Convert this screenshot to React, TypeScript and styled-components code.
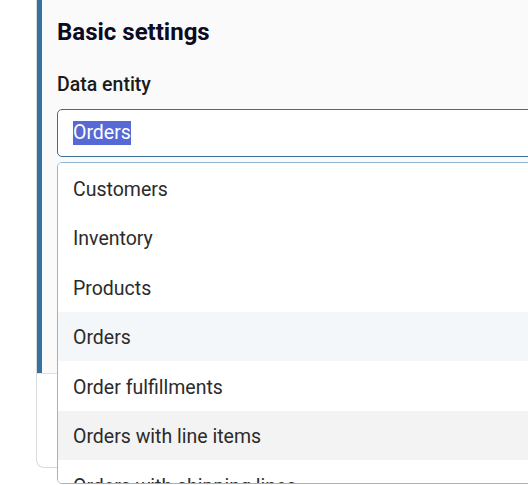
import styled, { createGlobalStyle } from 'styled-components';

const GlobalStyle = createGlobalStyle`
  html, body {
    margin: 0;
    padding: 0;
    background: #ffffff;
    overflow: hidden;
  }
  body {
    font-family: Roboto, "Liberation Sans", sans-serif;
  }
`;

const Page = styled.div`
  width: 528px;
  height: 485px;
  padding-left: 36px;
  box-sizing: border-box;
  position: relative;
`;

const Card = styled.div`
  width: 700px;
  border: 1px solid #d6dbe0;
  border-top: none;
  border-radius: 0 0 0 8px;
  background: #fff;
`;

const Section = styled.section`
  height: 373px;
  box-sizing: border-box;
  border-left: 5px solid #36729b;
  background: #fafafa;
  padding: 17px 0 0 15px;
  position: relative;
`;

const Heading = styled.h2`
  margin: 0;
  font-size: 24px;
  line-height: 30px;
  font-weight: 700;
  color: #0b0b24;
`;

const Label = styled.div`
  margin-top: 26px;
  font-size: 19.5px;
  line-height: 24px;
  font-weight: 500;
  color: #1b1b1b;
`;

const Input = styled.div`
  margin-top: 12px;
  height: 48px;
  box-sizing: border-box;
  border: 1px solid #3b6f95;
  border-radius: 5px;
  background: #fff;
  padding: 0 15px;
  display: flex;
  align-items: center;
  font-size: 19.5px;
  color: #333;
`;

const Selected = styled.span`
  background: #5769d4;
  color: #fff;
  line-height: 24px;
`;

const Footer = styled.div`
  height: 93px;
  border-top: 1px solid #dde2e6;
`;

const Menu = styled.ul`
  position: absolute;
  left: 15px;
  top: 162px;
  width: 640px;
  height: 322px;
  box-sizing: border-box;
  margin: 0;
  padding: 0;
  list-style: none;
  background: #fff;
  border: 1px solid #93b7d1;
  border-radius: 5px;
  overflow: hidden;
  z-index: 2;
`;

const Option = styled.li<{ $tone?: 'active' | 'hover' }>`
  height: 49.5px;
  box-sizing: border-box;
  display: flex;
  align-items: center;
  padding: 3px 0 0 15px;
  font-size: 19.5px;
  color: #2b2b2b;
  background: ${p =>
    p.$tone === 'active' ? '#f4f7f9' : p.$tone === 'hover' ? '#f3f3f3' : '#fff'};
`;

const options: { label: string; tone?: 'active' | 'hover' }[] = [
  { label: 'Customers' },
  { label: 'Inventory' },
  { label: 'Products' },
  { label: 'Orders', tone: 'active' },
  { label: 'Order fulfillments' },
  { label: 'Orders with line items', tone: 'hover' },
  { label: 'Orders with shipping lines' },
];

export default function App() {
  return (
    <>
      <GlobalStyle />
      <Page>
        <Card>
          <Section>
            <Heading>Basic settings</Heading>
            <Label>Data entity</Label>
            <Input>
              <Selected>Orders</Selected>
            </Input>
            <Menu>
              {options.map(o => (
                <Option key={o.label} $tone={o.tone}>
                  {o.label}
                </Option>
              ))}
            </Menu>
          </Section>
          <Footer />
        </Card>
      </Page>
    </>
  );
}
